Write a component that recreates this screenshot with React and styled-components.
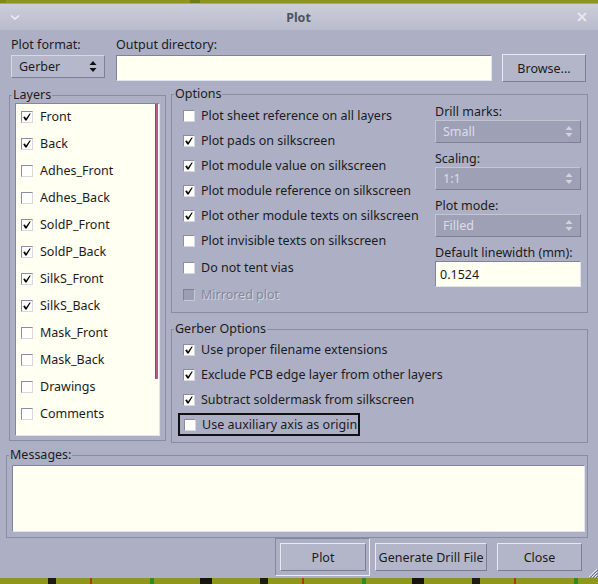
import React from "react";
import styled, { createGlobalStyle } from "styled-components";

const GlobalStyle = createGlobalStyle`
  html, body {
    margin: 0;
    padding: 0;
    background: #8e9620;
  }
  body {
    font-family: "Noto Sans", "DejaVu Sans", sans-serif;
    font-size: 12.5px;
    color: #1b1b1f;
  }
  * {
    box-sizing: border-box;
  }
`;

const Page = styled.div`
  width: 598px;
  height: 584px;
  display: flex;
  flex-direction: column;
  overflow: hidden;
  background: #8e9620;
`;

const TopStrip = styled.div`
  height: 4px;
  flex: none;
  background: linear-gradient(90deg, #7f8a12 0 6px, #8f961c 6px 190px, #6f7a18 190px 200px, #8f961c 200px);
  border-bottom: 1px solid #a9ae5a;
`;

const BottomStrip = styled.div`
  height: 6px;
  flex: none;
  background: repeating-linear-gradient(
    90deg,
    #8e9620 0 48px,
    #1c1c12 48px 56px,
    #8e9620 56px 90px,
    #a83a22 90px 92px,
    #8e9620 92px 150px,
    #2c8a2a 150px 154px,
    #8e9620 154px 200px,
    #15150d 200px 212px
  );
`;

const Dialog = styled.div`
  flex: 1;
  display: flex;
  flex-direction: column;
  background: #adb0c4;
  position: relative;
`;

const TitleBar = styled.div`
  height: 26px;
  flex: none;
  display: flex;
  align-items: center;
  justify-content: space-between;
  padding: 0 11px 0 10px;
  background: linear-gradient(#ccced9, #b8bbcc);
  color: #50525f;
  font-weight: bold;
  font-size: 12.5px;
`;

const TitleIcon = styled.svg`
  width: 10px;
  height: 10px;
  flex: none;
`;

const Body = styled.div`
  flex: 1;
  display: flex;
  flex-direction: column;
  padding: 6px 10px 0 6px;
`;

const TopRow = styled.div`
  display: flex;
  align-items: flex-start;
  padding-left: 5px;
`;

const FieldCol = styled.div`
  display: flex;
  flex-direction: column;
  width: ${(p) => p.$w || "auto"};
  flex: ${(p) => (p.$grow ? 1 : "none")};
  margin-right: ${(p) => p.$mr || 0}px;
`;

const Label = styled.div`
  height: ${(p) => p.$h || 17}px;
  line-height: 17px;
  padding-top: ${(p) => p.$pt || 0}px;
  white-space: nowrap;
  box-sizing: content-box;
`;

const Combo = styled.div`
  height: 23px;
  display: flex;
  align-items: center;
  justify-content: space-between;
  padding: 0 7px;
  background: ${(p) => (p.$disabled ? "#9ea1b5" : "#b5b8ca")};
  border: 1px solid;
  border-color: ${(p) =>
    p.$disabled ? "#c3c5d1 #7e8194 #7e8194 #c3c5d1" : "#d6d8e2 #7e8194 #7e8194 #d6d8e2"};
  color: ${(p) => (p.$disabled ? "#dcdde7" : "#1b1b1f")};
`;

const Sunken = styled.div`
  height: ${(p) => p.$h}px;
  background: #fffff2;
  border: 1px solid;
  border-color: #808396 #e4e5ec #e4e5ec #808396;
  padding-left: 4px;
  display: flex;
  align-items: center;
`;

const Button = styled.button`
  height: 28px;
  width: ${(p) => p.$w}px;
  margin-left: ${(p) => p.$ml || 0}px;
  margin-right: ${(p) => p.$mr || 0}px;
  flex: none;
  padding: 0;
  font: inherit;
  color: #1b1b1f;
  background: #b3b6c9;
  border: 1px solid;
  border-color: #e8e9f0 #7c7f91 #7c7f91 #e8e9f0;
`;

const Middle = styled.div`
  display: flex;
  align-items: flex-start;
  margin-top: 3px;
`;

const Group = styled.fieldset`
  margin: 0;
  padding: 0;
  min-width: 0;
  border: 1px solid #8a8ca0;
`;

const Legend = styled.legend`
  margin-left: 2px;
  padding: 0 1px;
  line-height: 18px;
  font-size: 12.5px;
`;

const LayersGroup = styled(Group)`
  width: 157px;
  margin: 1px 0 0 3px;
`;

const LayersInner = styled.div`
  padding: 0 5px 4px 5px;
`;

const LayerList = styled.div`
  height: 333px;
  margin-top: -1px;
  display: flex;
  background: #fffff2;
  border: 1px solid;
  border-color: #84879a #e2e3ea #e2e3ea #84879a;
  overflow: hidden;
`;

const LayerItems = styled.div`
  flex: 1;
  display: flex;
  flex-direction: column;
  margin-top: -1px;
`;

const LayerRow = styled.div`
  height: 27px;
  flex: none;
  display: flex;
  align-items: center;
  gap: 7px;
  padding-left: 5px;
  white-space: nowrap;
`;

const ScrollTrack = styled.div`
  width: 5px;
  flex: none;
  padding: 0 1px 0 1px;
`;

const ScrollThumb = styled.div`
  height: 275px;
  background: #b45c84;
  border-left: 1px solid #94466a;
`;

const RightCol = styled.div`
  flex: 1;
  margin-left: 5px;
  display: flex;
  flex-direction: column;
`;

const OptionsInner = styled.div`
  display: flex;
  padding: 0 6px 5px 11px;
`;

const CheckCol = styled.div`
  display: flex;
  flex-direction: column;
`;

const OptionRow = styled.div`
  height: ${(p) => (p.$focused ? 23 : 25)}px;
  margin: ${(p) => (p.$focused ? "1px 0 1px -5px" : `${p.$mt || 0}px 0 0 0`)};
  display: flex;
  align-items: center;
  gap: 6px;
  white-space: nowrap;
  align-self: flex-start;
  color: ${(p) => (p.$disabled ? "#85889b" : "#1b1b1f")};
  text-shadow: ${(p) => (p.$disabled ? "1px 1px 0 #d4d6e0" : "none")};
  border: ${(p) => (p.$focused ? "2px solid #111" : "none")};
  padding: ${(p) => (p.$focused ? "0 1px 0 4px" : "0")};
`;

const SideCol = styled.div`
  width: 146px;
  margin-left: auto;
  display: flex;
  flex-direction: column;
`;

const GerberGroup = styled(Group)`
  margin-top: 7px;
`;

const GerberInner = styled.div`
  display: flex;
  flex-direction: column;
  margin-top: -1px;
  padding: 0 6px 5px 11px;
`;

const MessagesGroup = styled(Group)`
  margin-top: 3px;
`;

const MessagesInner = styled.div`
  padding: 1px 2px 5px 5px;
`;

const ButtonRow = styled.div`
  display: flex;
  align-items: center;
  justify-content: flex-end;
  padding-right: 6px;
`;

const DefaultFrame = styled.div`
  padding: 4px 3px 4px 4px;
  border: 1px solid;
  border-color: #86889a #eceef4 #eceef4 #86889a;
`;

const Grip = styled.svg`
  position: absolute;
  right: 0;
  bottom: 0;
  width: 11px;
  height: 11px;
`;

const Box = styled.span`
  width: 12px;
  height: 12px;
  flex: none;
  display: inline-flex;
  align-items: center;
  justify-content: center;
  background: ${(p) => (p.$disabled ? "#9c9fb3" : "#fefefb")};
  border: 1px solid;
  border-color: ${(p) =>
    p.$disabled ? "#7f8295 #c6c8d3 #c6c8d3 #7f8295" : "#8a8d9f #d6d8e1 #d6d8e1 #8a8d9f"};
`;

const Check = ({ checked, disabled }) => (
  <Box $disabled={disabled}>
    {checked && (
      <svg width="10" height="10" viewBox="0 0 10 10">
        <path d="M1.2 5 L3.2 8.6 L4.6 8.6 L8.8 1.4 L7.6 1.4 L4 6.6 L3 4.6 Z" fill="#000" />
      </svg>
    )}
  </Box>
);

const Arrows = ({ color }) => (
  <svg width="8" height="13" viewBox="0 0 8 13">
    <path d="M4 1 L7.5 5 L0.5 5 Z" fill={color} />
    <path d="M4 12 L7.5 8 L0.5 8 Z" fill={color} />
  </svg>
);

const layers = [
  ["Front", true],
  ["Back", true],
  ["Adhes_Front", false],
  ["Adhes_Back", false],
  ["SoldP_Front", true],
  ["SoldP_Back", true],
  ["SilkS_Front", true],
  ["SilkS_Back", true],
  ["Mask_Front", false],
  ["Mask_Back", false],
  ["Drawings", false],
  ["Comments", false],
  ["Eco1", false],
];

const options = [
  ["Plot sheet reference on all layers", false],
  ["Plot pads on silkscreen", true],
  ["Plot module value on silkscreen", true],
  ["Plot module reference on silkscreen", true],
  ["Plot other module texts on silkscreen", true],
  ["Plot invisible texts on silkscreen", false],
];

const gerberOptions = [
  ["Use proper filename extensions", true],
  ["Exclude PCB edge layer from other layers", true],
  ["Subtract soldermask from silkscreen", true],
];

const App = () => (
  <>
    <GlobalStyle />
    <Page>
      <TopStrip />
      <Dialog>
        <TitleBar>
          <TitleIcon viewBox="0 0 10 10">
            <path d="M1 3.5 L5 7 L9 3.5" fill="none" stroke="#eef0f6" strokeWidth="1.6" />
          </TitleIcon>
          <span>Plot</span>
          <TitleIcon viewBox="0 0 10 10">
            <path d="M1 1 L9 9 M9 1 L1 9" stroke="#e6e7ef" strokeWidth="1.8" />
          </TitleIcon>
        </TitleBar>
        <Body>
          <TopRow>
            <FieldCol $w="94px" $mr={11}>
              <Label $h={19}>Plot format:</Label>
              <Combo>
                <span>Gerber</span>
                <Arrows color="#111" />
              </Combo>
            </FieldCol>
            <FieldCol $grow>
              <Label $h={19}>Output directory:</Label>
              <Sunken $h={26} />
            </FieldCol>
            <FieldCol>
              <Label $h={18} />
              <Button $w={84} $ml={10} $mr={2}>
                Browse...
              </Button>
            </FieldCol>
          </TopRow>

          <Middle>
            <LayersGroup>
              <Legend>Layers</Legend>
              <LayersInner>
                <LayerList>
                  <LayerItems>
                    {layers.map(([name, on]) => (
                      <LayerRow key={name}>
                        <Check checked={on} />
                        <span>{name}</span>
                      </LayerRow>
                    ))}
                  </LayerItems>
                  <ScrollTrack>
                    <ScrollThumb />
                  </ScrollTrack>
                </LayerList>
              </LayersInner>
            </LayersGroup>

            <RightCol>
              <Group>
                <Legend>Options</Legend>
                <OptionsInner>
                  <CheckCol>
                    {options.map(([text, on]) => (
                      <OptionRow key={text}>
                        <Check checked={on} />
                        <span>{text}</span>
                      </OptionRow>
                    ))}
                    <OptionRow $mt={2}>
                      <Check checked={false} />
                      <span>Do not tent vias</span>
                    </OptionRow>
                    <OptionRow $mt={2} $disabled>
                      <Check checked={false} disabled />
                      <span>Mirrored plot</span>
                    </OptionRow>
                  </CheckCol>
                  <SideCol>
                    <Label>Drill marks:</Label>
                    <Combo $disabled>
                      <span>Small</span>
                      <Arrows color="#d2d3dd" />
                    </Combo>
                    <Label $pt={7}>Scaling:</Label>
                    <Combo $disabled>
                      <span>1:1</span>
                      <Arrows color="#d2d3dd" />
                    </Combo>
                    <Label $pt={7}>Plot mode:</Label>
                    <Combo $disabled>
                      <span>Filled</span>
                      <Arrows color="#d2d3dd" />
                    </Combo>
                    <Label $pt={7}>Default linewidth (mm):</Label>
                    <Sunken $h={26}>0.1524</Sunken>
                  </SideCol>
                </OptionsInner>
              </Group>

              <GerberGroup>
                <Legend>Gerber Options</Legend>
                <GerberInner>
                  {gerberOptions.map(([text, on]) => (
                    <OptionRow key={text}>
                      <Check checked={on} />
                      <span>{text}</span>
                    </OptionRow>
                  ))}
                  <OptionRow $focused>
                    <Check checked={false} />
                    <span>Use auxiliary axis as origin</span>
                  </OptionRow>
                </GerberInner>
              </GerberGroup>
            </RightCol>
          </Middle>

          <MessagesGroup>
            <Legend>Messages:</Legend>
            <MessagesInner>
              <Sunken $h={67} />
            </MessagesInner>
          </MessagesGroup>

          <ButtonRow>
            <DefaultFrame>
              <Button $w={86}>Plot</Button>
            </DefaultFrame>
            <Button $w={112} $ml={5}>
              Generate Drill File
            </Button>
            <Button $w={85} $ml={10}>
              Close
            </Button>
          </ButtonRow>
        </Body>
        <Grip viewBox="0 0 11 11">
          <path d="M10 2 L2 10 M10 5 L5 10 M10 8 L8 10" stroke="#e8e9f0" strokeWidth="1" />
          <path d="M11 3 L3 11 M11 6 L6 11 M11 9 L9 11" stroke="#6e7184" strokeWidth="1" />
        </Grip>
      </Dialog>
      <BottomStrip />
    </Page>
  </>
);

export default App;
